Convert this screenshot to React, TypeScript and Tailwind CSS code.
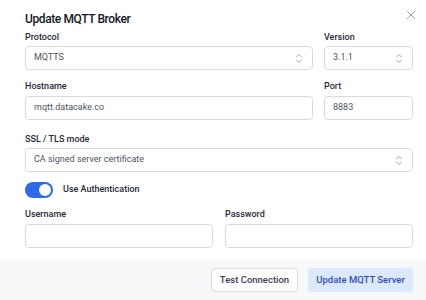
const Chevrons = () => (
  <svg width="8" height="11" viewBox="0 0 8 11" fill="none" stroke="#9ca3af" strokeWidth="1" strokeLinecap="round" strokeLinejoin="round">
    <path d="M1.5 4 4 1.5 6.5 4" />
    <path d="M1.5 7 4 9.5 6.5 7" />
  </svg>
);

const Label = ({ children }: { children: React.ReactNode }) => (
  <div className="h-[10px] text-[9px] font-medium leading-[10px] text-[#1f2937]">{children}</div>
);

const Select = ({ value }: { value: string }) => (
  <div className="mt-[4px] flex items-center justify-between h-[24px] pl-[8px] pr-[9px] border border-[#d7dbe0] rounded-[4px] text-[9px] text-[#4b5563]">
    <span>{value}</span>
    <Chevrons />
  </div>
);

const Input = ({ value }: { value?: string }) => (
  <div className="mt-[5px] flex items-center h-[24px] px-[8px] border border-[#d7dbe0] rounded-[4px] text-[9px] text-[#4b5563]">
    {value}
  </div>
);

export default function App() {
  return (
    <div className="w-[426px] h-[300px] bg-white font-['Roboto',sans-serif] flex flex-col overflow-hidden">
      <div className="flex-1 pl-[25px] pr-[13px] relative">
        <svg className="absolute left-[406px] top-[10px]" width="10" height="10" viewBox="0 0 10 10" stroke="#9ca3af" strokeWidth="1">
          <path d="M1 1l8 8M9 1l-8 8" />
        </svg>
        <h2 className="mt-[12px] h-[14px] text-[12px] font-medium leading-[14px] tracking-[-0.4px] text-[#111827]">Update MQTT Broker</h2>
        <div className="flex gap-[11px] mt-[6px]">
          <div className="flex-1">
            <Label>Protocol</Label>
            <Select value="MQTTS" />
          </div>
          <div className="w-[89px]">
            <Label>Version</Label>
            <Select value="3.1.1" />
          </div>
        </div>
        <div className="flex gap-[11px] mt-[11px]">
          <div className="flex-1">
            <Label>Hostname</Label>
            <Input value="mqtt.datacake.co" />
          </div>
          <div className="w-[89px]">
            <Label>Port</Label>
            <Input value="8883" />
          </div>
        </div>
        <div className="mt-[14px]">
          <Label>SSL / TLS mode</Label>
          <Select value="CA signed server certificate" />
        </div>
        <div className="flex items-center gap-[10px] mt-[10px]">
          <div className="w-[28px] h-[16px] rounded-full bg-[#2f6ae6] flex items-center justify-end px-[2px]">
            <div className="w-[12px] h-[12px] rounded-full bg-white" />
          </div>
          <span className="text-[9px] font-medium text-[#1f2937]">Use Authentication</span>
        </div>
        <div className="flex gap-[12px] mt-[11px]">
          <div className="flex-1">
            <Label>Username</Label>
            <Input />
          </div>
          <div className="flex-1">
            <Label>Password</Label>
            <Input />
          </div>
        </div>
      </div>
      <div className="h-[40px] shrink-0 bg-[#f7f8fa] flex items-center justify-end gap-[10px] pr-[13px]">
        <button className="w-[87px] h-[24px] bg-white border border-[#d7dbe0] rounded-[4px] text-[9.5px] font-medium text-[#374151]">
          Test Connection
        </button>
        <button className="w-[105px] h-[24px] bg-[#dce8fd] rounded-[4px] text-[9.5px] font-medium text-[#2d4fb8]">
          Update MQTT Server
        </button>
      </div>
    </div>
  );
}
